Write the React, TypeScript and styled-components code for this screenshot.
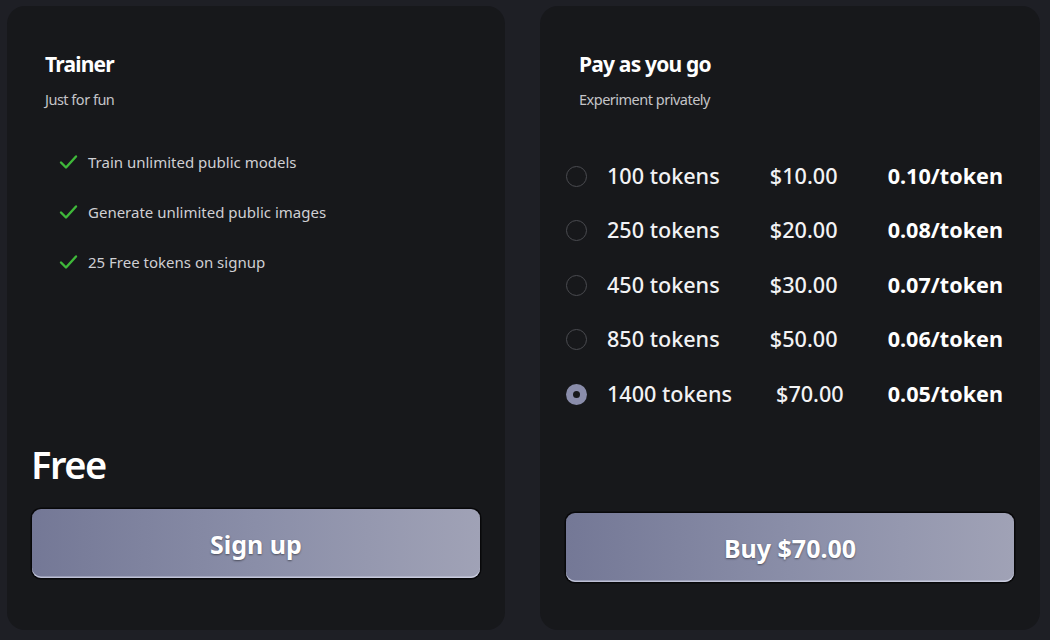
import React, { useState } from 'react';
import styled, { createGlobalStyle } from 'styled-components';

const GlobalStyle = createGlobalStyle`
   * { box-sizing: border-box; }
   body {
      margin: 0;
      background: #1e1f25;
      font-family: 'Noto Sans', 'Open Sans', sans-serif;
      color: #fff;
   }
`;

type Pack = {
   tokens: number;
   price: number;
   perToken: string;
};

const packs: Pack[] = [
   { tokens: 100, price: 10, perToken: '0.10' },
   { tokens: 250, price: 20, perToken: '0.08' },
   { tokens: 450, price: 30, perToken: '0.07' },
   { tokens: 850, price: 50, perToken: '0.06' },
   { tokens: 1400, price: 70, perToken: '0.05' },
];

const features = ['Train unlimited public models', 'Generate unlimited public images', '25 Free tokens on signup'];

const Check = () => (
   <svg width="19" height="16" viewBox="0 0 19 16" fill="none">
      <path d="M2 8.5 L7 13.5 L17 2.5" stroke="#3fb83a" strokeWidth="2.4" strokeLinecap="round" strokeLinejoin="round" />
   </svg>
);

export default function App() {
   const [selected, setSelected] = useState(4);
   const current = packs[selected];

   return (
      <Page>
         <GlobalStyle />
         <Card bottom={52} left={25}>
            <Header>
               <Title>Trainer</Title>
               <Subtitle>Just for fun</Subtitle>
            </Header>
            <FeatureList>
               {features.map((f) => (
                  <Feature key={f}>
                     <Check />
                     <span>{f}</span>
                  </Feature>
               ))}
            </FeatureList>
            <Bottom>
               <Price>Free</Price>
               <ActionButton>Sign up</ActionButton>
            </Bottom>
         </Card>

         <Card bottom={48} left={26}>
            <Header>
               <Title>Pay as you go</Title>
               <Subtitle>Experiment privately</Subtitle>
            </Header>
            <PackList>
               {packs.map((p, i) => (
                  <PackRow key={p.tokens} onClick={() => setSelected(i)}>
                     <PackLabel>
                        <Radio checked={i === selected} />
                        <span>{p.tokens} tokens</span>
                     </PackLabel>
                     <span>${p.price.toFixed(2)}</span>
                     <PerToken>{p.perToken}/token</PerToken>
                  </PackRow>
               ))}
            </PackList>
            <Bottom>
               <ActionButton>Buy ${current.price.toFixed(2)}</ActionButton>
            </Bottom>
         </Card>
      </Page>
   );
}

const Page = styled.div`
   display: grid;
   grid-template-columns: 498px 500px;
   gap: 35px;
   padding: 6px 10px 10px 7px;
   height: 640px;
`;

const Card = styled.div<{ bottom: number; left: number }>`
   display: flex;
   flex-direction: column;
   background: #17181b;
   border-radius: 18px;
   padding: 44px 26px ${(p) => p.bottom}px ${(p) => p.left}px;
   height: 624px;
`;

const Header = styled.div`
   padding-left: 13px;
`;

const Title = styled.h2`
   margin: 0;
   font-size: 21px;
   font-weight: 700;
   letter-spacing: -0.8px;
   line-height: 28px;
   color: #fff;
`;

const Subtitle = styled.p`
   margin: 11px 0 0;
   font-size: 14.5px;
   letter-spacing: -0.5px;
   line-height: 20px;
   color: #c4c4c8;
`;

const FeatureList = styled.ul`
   list-style: none;
   margin: 42px 0 0;
   padding: 0 0 0 27px;
   display: flex;
   flex-direction: column;
   gap: 28px;
`;

const Feature = styled.li`
   display: flex;
   align-items: center;
   gap: 10px;
   font-size: 15px;
   line-height: 22px;
   color: #cfcfd3;
`;

const Bottom = styled.div`
   margin-top: auto;
`;

const Price = styled.div`
   font-size: 38px;
   font-weight: 600;
   letter-spacing: -1.5px;
   line-height: 44px;
   margin: 0 0 23px -1px;
   color: #fff;
`;

const ActionButton = styled.button`
   display: block;
   width: 448px;
   height: 69px;
   border: none;
   border-radius: 9px;
   background: linear-gradient(90deg, #747896 0%, #8a8ea8 50%, #a0a2b6 100%);
   box-shadow: 0 0 0 1.5px #08080a, inset 0 -1.5px 0 rgba(220, 222, 240, 0.7);
   font-family: 'Noto Sans', sans-serif;
   font-size: 25px;
   font-weight: 700;
   color: #fff;
   text-shadow: 0 1px 2px rgba(0, 0, 0, 0.45);
   cursor: pointer;
`;

const PackList = styled.div`
   display: flex;
   flex-direction: column;
   margin-top: 39px;
   width: 437px;
`;

const PackRow = styled.div`
   display: flex;
   justify-content: space-between;
   align-items: center;
   height: 54.5px;
   font-size: 21.6px;
   font-weight: 500;
   color: #f2f2f4;
   cursor: pointer;
`;

const PackLabel = styled.div`
   display: flex;
   align-items: center;
   gap: 20px;
`;

const Radio = styled.span<{ checked: boolean }>`
   width: 21px;
   height: 21px;
   border-radius: 50%;
   flex-shrink: 0;
   position: relative;
   top: 1px;
   border: ${(p) => (p.checked ? 'none' : '1.5px solid #4a4b50')};
   background: ${(p) => (p.checked ? '#8a8dab' : 'transparent')};

   &::after {
      content: '';
      display: ${(p) => (p.checked ? 'block' : 'none')};
      position: absolute;
      left: 7px;
      top: 7px;
      width: 7px;
      height: 7px;
      border-radius: 50%;
      background: #17181b;
   }
`;

const PerToken = styled.span`
   font-weight: 700;
   color: #fff;
`;
